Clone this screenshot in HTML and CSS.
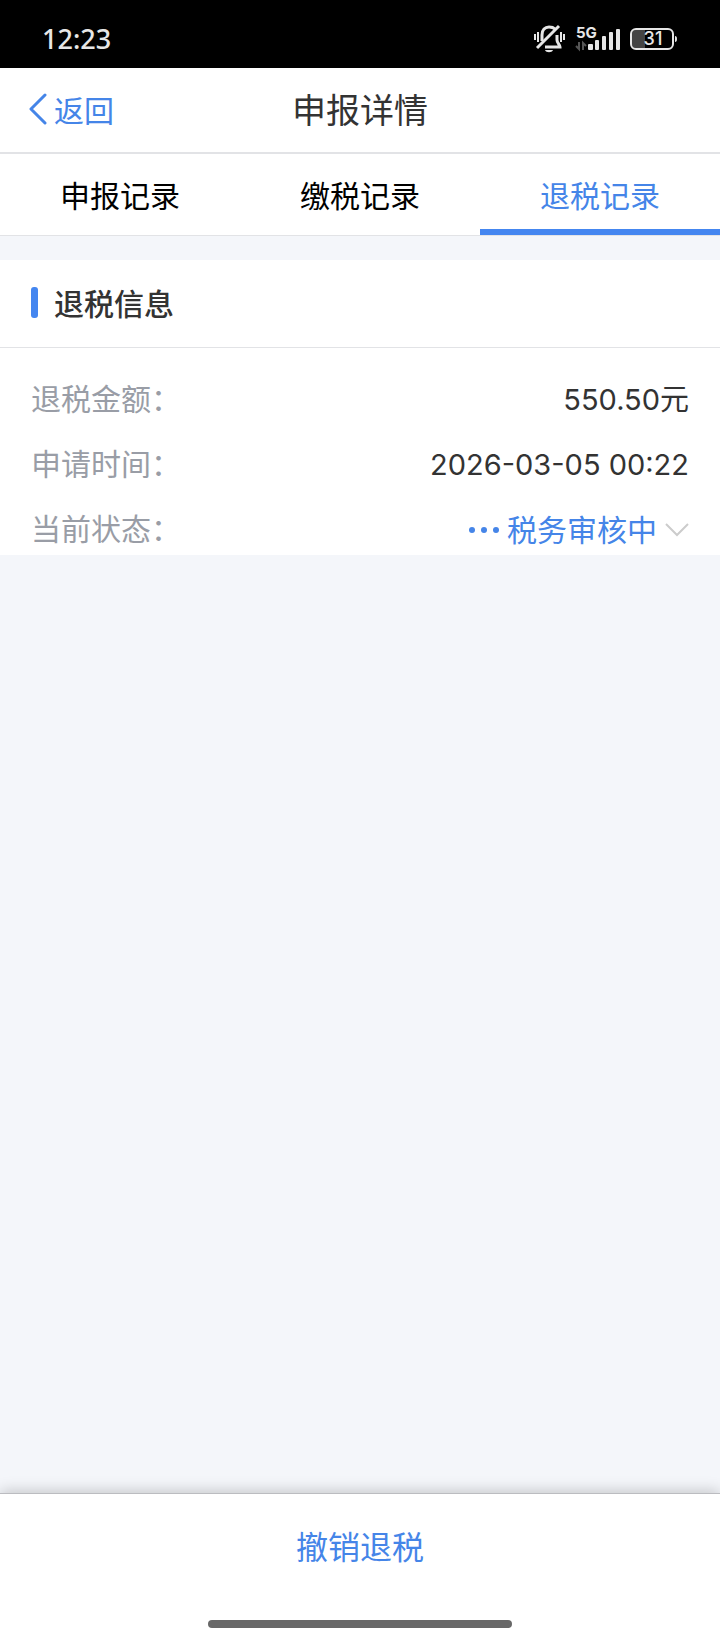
FILE: index.html
```html
<!DOCTYPE html>
<html lang="zh-CN">
<head>
  <meta charset="UTF-8" />
  <meta name="viewport" content="width=device-width, initial-scale=1.0" />
  <title>申报详情</title>
  <link rel="stylesheet" href="styles.css">
</head>
<body>

  <div class="status-bar">
    <span class="clock">12:23</span>
    <div class="status-icons">
      <!-- muted bell -->
      <svg width="32" height="30" viewBox="0 0 32 30" fill="none" stroke="#e6e6e6" stroke-width="2">
        <path d="M8 17V11C8 6 11 3 15 3C18 3 20 4 21 5M23 11V16C23 19 26 21 26 23H11" stroke-width="3" />
        <path d="M25 2L3 24" stroke-width="3" />
        <path d="M11 26H19C18 29 12 29 11 26Z" fill="#e6e6e6" stroke="none" />
        <path d="M1 10V16M4 8V18M27 8V18M30 10V16" />
      </svg>
      <!-- 5G signal -->
      <div class="signal">
        <span class="network">5G</span>
        <svg width="46" height="26" viewBox="0 0 46 26" fill="#e6e6e6">
          <path d="M4 16V23L1 20M8 24V17L11 20" fill="none" stroke="#555" stroke-width="2" />
          <rect x="13" y="18" width="5" height="6" rx="1" />
          <rect x="20" y="14" width="4" height="10" rx="1" />
          <rect x="27" y="10" width="4" height="14" rx="1" />
          <rect x="34" y="6" width="4" height="18" rx="1" />
          <rect x="41" y="3" width="4" height="21" rx="1" />
        </svg>
      </div>
      <!-- battery -->
      <svg width="48" height="22" viewBox="0 0 48 22">
        <path d="M6 2H15V20H6Q2 20 2 16V6Q2 2 6 2Z" fill="#444" />
        <rect x="1" y="1" width="42" height="20" rx="5" fill="none" stroke="#e6e6e6" stroke-width="2" />
        <path d="M45 8Q47 8 47 11Q47 14 45 14Z" fill="#e6e6e6" />
        <text class="level" x="23" y="17" text-anchor="middle" fill="#e6e6e6">31</text>
      </svg>
    </div>
  </div>

  <header class="header">
    <a class="back" href="#">
      <svg width="18" height="32" viewBox="0 0 18 32" fill="none" stroke="#4585e8" stroke-width="3" stroke-linecap="round" stroke-linejoin="round">
        <path d="M16 2L2 16L16 30" />
      </svg>
      返回
    </a>
    <h1>申报详情</h1>
  </header>

  <nav class="tabs">
    <button type="button">申报记录</button>
    <button type="button">缴税记录</button>
    <button type="button" class="active">退税记录</button>
  </nav>

  <main class="card">
    <h2>退税信息</h2>
    <dl class="info">
      <div class="row">
        <dt>退税金额：</dt>
        <dd>550.50元</dd>
      </div>
      <div class="row">
        <dt>申请时间：</dt>
        <dd>2026-03-05 00:22</dd>
      </div>
      <div class="row">
        <dt>当前状态：</dt>
        <dd>
          <button type="button" class="state">
            <svg width="30" height="6" viewBox="0 0 30 6" fill="#4585e8">
              <circle cx="3" cy="3" r="3" />
              <circle cx="15" cy="3" r="3" />
              <circle cx="27" cy="3" r="3" />
            </svg>
            <span>税务审核中</span>
            <svg width="24" height="14" viewBox="0 0 24 14" fill="none" stroke="#ccc" stroke-width="2">
              <path d="M1 1L12 12L23 1" />
            </svg>
          </button>
        </dd>
      </div>
    </dl>
  </main>

  <footer class="footer">
    <button type="button" class="revoke">撤销退税</button>
    <div class="home-bar"></div>
  </footer>

</body>
</html>
```
FILE: styles.css
```css
* {
  box-sizing: border-box;
}

body {
  margin: 0;
  min-height: 100vh;
  display: flex;
  flex-direction: column;
  font-family: "Noto Sans CJK SC", sans-serif;
  font-size: 30px;
  line-height: 40px;
  color: #333;
  background-color: #f4f6fa;
}

button {
  padding: 0;
  border: none;
  background: none;
  font: inherit;
  color: inherit;
  cursor: pointer;
}

.status-bar {
  display: flex;
  justify-content: space-between;
  align-items: center;
  height: 68px;
  padding: 9px 42px 0;
  background-color: #000;
}

.clock {
  font-family: "Noto Sans", sans-serif;
  font-size: 27px;
  font-weight: 500;
  color: #e6e6e6;
}

.status-icons {
  display: flex;
  align-items: center;
  gap: 9px;
}

.signal {
  display: grid;
}

.signal > * {
  grid-area: 1 / 1;
}

.network {
  padding-left: 1px;
  font-family: Inter, sans-serif;
  font-size: 15px;
  font-weight: 700;
  line-height: 14px;
  color: #e6e6e6;
}

.level {
  font-family: Inter, sans-serif;
  font-size: 18px;
  font-weight: 500;
}

.header {
  display: grid;
  grid-template-columns: 1fr auto 1fr;
  align-items: center;
  height: 86px;
  padding: 0 29px 3px;
  background-color: #fff;
  border-bottom: 2px solid #e2e3e6;
}

.back {
  display: flex;
  align-items: center;
  gap: 7px;
  color: #4585e8;
  text-decoration: none;
}

.header h1 {
  margin: 0;
  font-size: 34px;
  font-weight: 400;
}

.tabs {
  display: grid;
  grid-template-columns: repeat(3, 1fr);
  height: 82px;
  background-color: #fff;
  border-bottom: 1px solid #e2e3e6;
}

.tabs button {
  padding-top: 4px;
  border-bottom: 6px solid transparent;
  color: #000;
}

.tabs .active {
  color: #4585e8;
  border-bottom-color: #4486f0;
}

.card {
  margin-top: 24px;
  background-color: #fff;
}

.card h2 {
  display: flex;
  align-items: center;
  gap: 16px;
  height: 88px;
  margin: 0;
  padding: 0 31px 3px;
  font-size: 30px;
  font-weight: 500;
  border-bottom: 1px solid #e2e3e6;
}

.card h2::before {
  content: "";
  width: 7px;
  height: 31px;
  border-radius: 3px;
  background-color: #4486f0;
}

.info {
  display: flex;
  flex-direction: column;
  gap: 22px;
  margin: 0;
  padding: 29px 31px 5px;
}

.row {
  display: flex;
  justify-content: space-between;
}

.row dt {
  color: #999da6;
}

.row dd {
  margin: 0;
  padding-top: 3px;
  font-family: Inter, "Noto Sans CJK SC", sans-serif;
  font-size: 29px;
}

.state {
  display: flex;
  align-items: center;
  gap: 8px;
  font-size: 30px;
  color: #4585e8;
}

.footer {
  display: flex;
  flex-direction: column;
  align-items: center;
  margin-top: auto;
  background-color: #fff;
  border-top: 1px solid #bbbcc0;
  box-shadow: 0 -2px 14px rgba(0, 0, 0, 0.2);
}

.revoke {
  width: 100%;
  padding: 31px 0 35px;
  font-size: 32px;
  color: #4585e8;
}

.home-bar {
  width: 304px;
  height: 8px;
  margin: 20px 0 12px;
  border-radius: 4px;
  background-color: #686868;
}
```
